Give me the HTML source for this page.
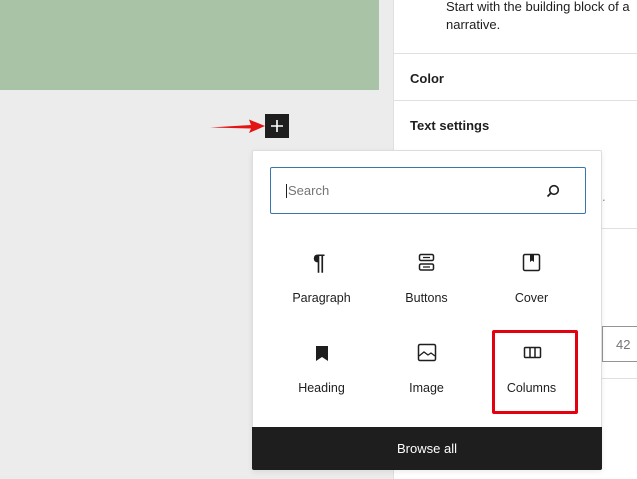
<!DOCTYPE html>
<html><head><style>
*{margin:0;padding:0;box-sizing:border-box}
body{width:637px;height:479px;overflow:hidden;background:#ececec;font-family:"Liberation Sans",sans-serif;color:#1e1e1e;position:relative}
.a{position:absolute}
.lbl{font-size:12.5px;text-align:center;width:105px}
</style></head><body>
<div class="a" style="left:0;top:0;width:379px;height:90px;background:#a8c3a6"></div>
<div class="a" style="left:393px;top:0;width:244px;height:479px;background:#fff;border-left:1px solid #e0e0e0"></div>
<div class="a" style="left:446px;top:-2px;font-size:13px;line-height:18px;color:#1e1e1e;white-space:nowrap">Start with the building block of a<br>narrative.</div>
<div class="a" style="left:394px;top:53px;width:243px;height:1px;background:#e0e0e0"></div>
<div class="a" style="left:410px;top:71px;font-size:13px;font-weight:600">Color</div>
<div class="a" style="left:394px;top:100px;width:243px;height:1px;background:#e0e0e0"></div>
<div class="a" style="left:410px;top:118px;font-size:13px;font-weight:600">Text settings</div>
<div class="a" style="left:602px;top:189px;font-size:13px;color:#888">.</div>
<div class="a" style="left:602px;top:228px;width:35px;height:1px;background:#e0e0e0"></div>
<div class="a" style="left:602px;top:326px;width:40px;height:36px;border:1px solid #949494;border-right:none"></div>
<div class="a" style="left:616px;top:337px;font-size:13px;color:#757575">42</div>
<div class="a" style="left:602px;top:378px;width:35px;height:1px;background:#e0e0e0"></div>
<svg class="a" style="left:208px;top:118px" width="58" height="16"><path d="M2 9.5 L43 7 L41 1.5 L57 8 L41 15 L43 10.5 Z" fill="#e31414"/></svg>
<div class="a" style="left:265px;top:114px;width:24px;height:24px;background:#1e1e1e"></div>
<svg class="a" style="left:265px;top:114px" width="24" height="24"><path d="M12 6v12M6 12h12" stroke="#fff" stroke-width="1.6"/></svg>
<div class="a" style="left:252px;top:150px;width:350px;height:320px;background:#fff;border:1px solid #ddd;border-radius:2px;box-shadow:0 2px 6px rgba(0,0,0,.08)"></div>
<div class="a" style="left:270px;top:167px;width:316px;height:47px;border:1.5px solid #3a76ad;border-radius:2px"></div>
<div class="a" style="left:286px;top:184px;font-size:13px;color:#757575;border-left:1px solid #1e1e1e;padding-left:1px;line-height:14px">Search</div>
<svg class="a" style="left:545px;top:183px" width="16" height="16"><circle cx="9" cy="7" r="4.3" fill="none" stroke="#1e1e1e" stroke-width="1.6"/><path d="M6 10 L2.5 13.5" stroke="#1e1e1e" stroke-width="1.8"/></svg>
<div class="a" style="left:313px;top:250px;font-size:22px;font-weight:bold">¶</div>
<svg class="a" style="left:417px;top:253px" width="20" height="20"><rect x="2.5" y="1.5" width="14" height="6" rx="1.5" fill="none" stroke="#1e1e1e" stroke-width="1.5"/><rect x="2.5" y="11" width="14" height="6" rx="1.5" fill="none" stroke="#1e1e1e" stroke-width="1.5"/><path d="M6 4.5h7M6 14h7" stroke="#1e1e1e" stroke-width="1.2"/></svg>
<svg class="a" style="left:522px;top:253px" width="20" height="20"><rect x="1.5" y="1.5" width="16" height="16" rx="1.5" fill="none" stroke="#1e1e1e" stroke-width="1.5"/><path d="M8 2h4v7l-2-1.5L8 9z" fill="#1e1e1e"/></svg>
<div class="a lbl" style="left:269px;top:291px">Paragraph</div>
<div class="a lbl" style="left:374px;top:291px">Buttons</div>
<div class="a lbl" style="left:479px;top:291px">Cover</div>
<svg class="a" style="left:312px;top:344px" width="20" height="20"><path d="M4 2h12v15l-6-4-6 4z" fill="#1e1e1e"/></svg>
<svg class="a" style="left:417px;top:343px" width="20" height="20"><rect x="1.5" y="1.5" width="17" height="16" rx="1.5" fill="none" stroke="#1e1e1e" stroke-width="1.5"/><path d="M2 13l5-4 4 3 3-2 4 3" fill="none" stroke="#1e1e1e" stroke-width="1.3"/></svg>
<svg class="a" style="left:523px;top:345px" width="20" height="16"><rect x="1.5" y="2.5" width="16" height="10" rx="1" fill="none" stroke="#1e1e1e" stroke-width="1.5"/><path d="M7 3v9M12 3v9" stroke="#1e1e1e" stroke-width="1.5"/></svg>
<div class="a lbl" style="left:269px;top:381px">Heading</div>
<div class="a lbl" style="left:374px;top:381px">Image</div>
<div class="a lbl" style="left:479px;top:381px">Columns</div>
<div class="a" style="left:492px;top:330px;width:86px;height:84px;border:3px solid #e3000f;border-radius:2px"></div>
<div class="a" style="left:252px;top:427px;width:350px;height:43px;background:#1e1e1e;color:#fff;font-size:13px;text-align:center;line-height:43px;border-radius:0 0 2px 2px">Browse all</div>
</body></html>
